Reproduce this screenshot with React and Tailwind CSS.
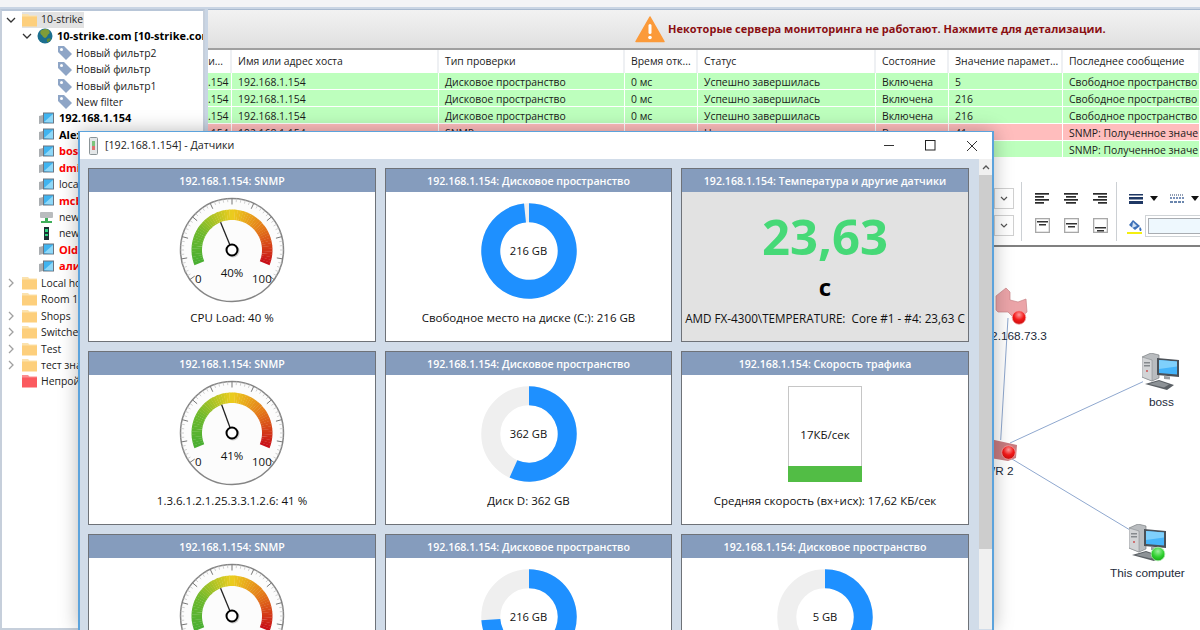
import React from "react";

const polar = (cx, cy, r, deg) => {
  const a = ((deg - 90) * Math.PI) / 180;
  return [cx + r * Math.cos(a), cy + r * Math.sin(a)];
};
const arcPath = (cx, cy, r0, r1, a0, a1) => {
  const [x0, y0] = polar(cx, cy, r1, a0);
  const [x1, y1] = polar(cx, cy, r1, a1);
  const [x2, y2] = polar(cx, cy, r0, a1);
  const [x3, y3] = polar(cx, cy, r0, a0);
  const large = a1 - a0 > 180 ? 1 : 0;
  return `M${x0} ${y0}A${r1} ${r1} 0 ${large} 1 ${x1} ${y1}L${x2} ${y2}A${r0} ${r0} 0 ${large} 0 ${x3} ${y3}Z`;
};
const lerp = (s, e, t) => Math.round(s + (e - s) * t);
const stops = [
  [0, [74, 175, 50]],
  [0.22, [110, 185, 45]],
  [0.5, [236, 205, 30]],
  [0.75, [228, 120, 25]],
  [1, [200, 16, 24]],
];
const colorAt = (t) => {
  for (let i = 0; i < stops.length - 1; i++) {
    const [p0, c0] = stops[i];
    const [p1, c1] = stops[i + 1];
    if (t <= p1) {
      const k = (t - p0) / (p1 - p0);
      return `rgb(${lerp(c0[0], c1[0], k)},${lerp(c0[1], c1[1], k)},${lerp(c0[2], c1[2], k)})`;
    }
  }
  return "rgb(200,16,24)";
};

function Gauge({ value }) {
  const cx = 56, cy = 56, R = 51.5;
  const angle = -112 + (value / 100) * 224;
  const segs = Array.from({ length: 56 }, (_, i) => i);
  const ticks = Array.from({ length: 51 }, (_, i) => i);
  const [nx, ny] = polar(cx, cy, 30, angle);
  return (
    <svg width="112" height="112" viewBox="0 0 112 112" className="block">
      <circle cx={cx} cy={cy} r={R} fill="#fcfcfc" stroke="#858585" strokeWidth="1.5" />
      {ticks.map((i) => {
        const a = -125 + i * 5;
        const major = i % 5 === 0;
        const [x0, y0] = polar(cx, cy, R, a);
        const [x1, y1] = polar(cx, cy, major ? R - 6 : R - 3.5, a);
        return <line key={i} x1={x0} y1={y0} x2={x1} y2={y1} stroke={major ? "#777" : "#c4c4c4"} strokeWidth={major ? 1 : 0.8} />;
      })}
      {segs.map((i) => {
        const a0 = -112 + i * 4;
        return <path key={i} d={arcPath(cx, cy, 30, 40.5, a0, a0 + 4.4 > 112 ? 112 : a0 + 4.4)} fill={colorAt(i / 55)} />;
      })}
      <line x1={cx} y1={cy} x2={nx} y2={ny} stroke="#222" strokeWidth="1.3" />
      <circle cx={cx + 1} cy={cy + 1} r="6.5" fill="#ccc" />
      <circle cx={cx} cy={cy} r="5.5" fill="#fff" stroke="#000" strokeWidth="2" />
    </svg>
  );
}

function Donut({ start, end }) {
  const cx = 50, cy = 50;
  return (
    <svg width="100" height="100" viewBox="0 0 100 100" className="block">
      <circle cx={cx} cy={cy} r="38.25" fill="none" stroke="#efefef" strokeWidth="19" />
      <path d={arcPath(cx, cy, 28.75, 47.75, start, end)} fill="#1e90ff" />
    </svg>
  );
}

function Card({ title, children, caption, gray }) {
  return (
    <div className={`border border-[#6e7278] flex flex-col h-[174px] ${gray ? "bg-[#e2e2e2]" : "bg-white"}`}>
      <div className="h-[23px] shrink-0 bg-[#859cbd] text-white text-center text-[10.6px] font-semibold leading-[25px] whitespace-nowrap">{title}</div>
      {children}
      {caption && <div className="text-center text-[11.5px] leading-[16px] text-[#111] whitespace-nowrap">{caption}</div>}
    </div>
  );
}

function GaugeCard({ value, caption }) {
  return (
    <Card title="192.168.1.154: SNMP" caption={caption}>
      <div className="relative mx-auto mt-[2px] mb-[4px] w-[112px] h-[112px] shrink-0 text-[11.5px] text-[#111]">
        <Gauge value={value} />
        <span className="absolute left-[38px] top-[71px] w-[36px] text-center leading-[16px]">{value}%</span>
        <span className="absolute left-[19px] top-[77px] leading-[16px]">0</span>
        <span className="absolute left-[76px] top-[77px] leading-[16px]">100</span>
      </div>
    </Card>
  );
}

function DonutCard({ value, start, end, caption }) {
  return (
    <Card title="192.168.1.154: Дисковое пространство" caption={caption}>
      <div className="relative mx-auto mt-[9px] mb-[9px] w-[100px] h-[100px] shrink-0">
        <Donut start={start} end={end} />
        <span className="absolute inset-0 flex items-center justify-center text-[11.2px] text-[#111]">{value}</span>
      </div>
    </Card>
  );
}

const PcIcon = () => (
  <svg width="15" height="15" viewBox="0 0 15 15" className="shrink-0">
    <path d="M0 5l4-1v8l-4 1z" fill="#a9adb0" />
    <rect x="4" y="1.500" width="11" height="11" fill="#6a7480" />
    <rect x="5" y="2.500" width="9" height="9" fill="#40b4f0" />
    <path d="M5 11l9-8v8.500z" fill="#8fd8f8" />
  </svg>
);
const Folder = ({ color = "#fdcf7c", tab = "#fbe2ae" }) => (
  <svg width="15" height="14" viewBox="0 0 15 14" className="shrink-0">
    <path d="M0 1h6l1.500 1.500H15V5H0z" fill={tab} />
    <rect x="0" y="3.500" width="15" height="10" fill={color} />
  </svg>
);
const Tag = () => (
  <svg width="16" height="16" viewBox="0 0 16 16" className="shrink-0">
    <path d="M1 1h6l8 8-6 6-8-8z" fill="#8ea5c6" />
    <circle cx="4.500" cy="4.500" r="1.500" fill="#fff" />
  </svg>
);
const Globe = () => (
  <svg width="16" height="16" viewBox="0 0 16 16" className="shrink-0">
    <circle cx="8" cy="8" r="7.500" fill="#1c6f8f" />
    <path d="M4 2.500c3-2 6-2 8 0 1 2 1 3-1 4-1 3-3 4-4 3-2-1-1-2-3-3-1-1-1-3 0-4z" fill="#7f9c38" />
    <path d="M10 11c2-1 3-1 4 0-1 2-2 3-4 3z" fill="#5e8a30" />
  </svg>
);
const Chevron = ({ open }) => (
  <svg width="10" height="10" viewBox="0 0 10 10" className="shrink-0">
    {open ? (
      <path d="M1 3l4 4 4-4" fill="none" stroke="#333" strokeWidth="1.300" />
    ) : (
      <path d="M3 1l4 4-4 4" fill="none" stroke="#a0a0a0" strokeWidth="1.300" />
    )}
  </svg>
);

function Row({ indent, chev, icon, label, cls = "text-[#222] text-[10.4px]", gap = 4 }) {
  return (
    <div className="h-[16.45px] flex items-center whitespace-nowrap" style={{ paddingLeft: indent }}>
      <span className="w-[12px] mr-[5px] flex justify-center">{chev !== undefined && <Chevron open={chev} />}</span>
      <span className="flex" style={{ marginRight: gap }}>{icon}</span>
      <span className={`${cls} leading-[16px]`}>{label}</span>
    </div>
  );
}

const Bold = "font-bold text-black text-[11px]";
const Red = "font-bold text-[#ff0000] text-[11px]";

function Tree() {
  return (
    <div className="w-[205px] shrink-0 mr-[3px] border-2 border-[#c6cfdb] border-t-[#b8c6d8] bg-white pt-[1px] overflow-hidden h-full">
      <div className="flex items-center h-[16px] pl-[3px] whitespace-nowrap">
        <span className="w-[12px] mr-[5px] flex justify-center"><Chevron open /></span>
        <span className="flex items-center bg-[#e2e2e2] pr-[1px] h-[16px]">
          <Folder />
          <span className="ml-[4px] text-[10.4px] text-[#222]">10-strike</span>
        </span>
      </div>
      <Row indent={20} chev icon={<Globe />} label="10-strike.com [10-strike.com]" cls={Bold} />
      <Row indent={38} icon={<Tag />} gap={3} label="Новый фильтр2" />
      <Row indent={38} icon={<Tag />} gap={3} label="Новый фильтр" />
      <Row indent={38} icon={<Tag />} gap={3} label="Новый фильтр1" />
      <Row indent={38} icon={<Tag />} gap={3} label="New filter" />
      <Row indent={20} icon={<PcIcon />} gap={5} label="192.168.1.154" cls={Bold} />
      <Row indent={20} icon={<PcIcon />} gap={5} label="Alex" cls={Bold} />
      <Row indent={20} icon={<PcIcon />} gap={5} label="boss" cls={Red} />
      <Row indent={20} icon={<PcIcon />} gap={5} label="dmi" cls={Red} />
      <Row indent={20} icon={<PcIcon />} gap={5} label="local" />
      <Row indent={20} icon={<PcIcon />} gap={5} label="mcb" cls={Red} />
      <Row indent={20} gap={5} icon={<svg width="15" height="15" viewBox="0 0 15 15"><rect x="1" y="2" width="13" height="6" rx="1" fill="#b9bcbe" /><rect x="6" y="8" width="3" height="3" fill="#3fae5a" /><rect x="2" y="11" width="11" height="2" fill="#3fae5a" /></svg>} label="new" />
      <Row indent={20} gap={5} icon={<svg width="15" height="15" viewBox="0 0 15 15"><rect x="5" y="1" width="5" height="13" fill="#1b3034" /><rect x="6" y="3" width="3" height="3" fill="#2fd47f" /><rect x="6" y="8" width="3" height="2" fill="#2fd47f" /></svg>} label="new" />
      <Row indent={20} icon={<PcIcon />} gap={5} label="Old" cls={Red} />
      <Row indent={20} icon={<PcIcon />} gap={5} label="али" cls={Red} />
      <Row indent={3} chev={false} icon={<Folder />} label="Local ho" />
      <Row indent={3} icon={<Folder />} label="Room 1" />
      <Row indent={3} chev={false} icon={<Folder />} label="Shops" />
      <Row indent={3} chev={false} icon={<Folder />} label="Switches" />
      <Row indent={3} chev={false} icon={<Folder />} label="Test" />
      <Row indent={3} chev={false} icon={<Folder />} label="тест зна" />
      <Row indent={3} icon={<Folder color="#fb5a5f" tab="#fb8f92" />} label="Непрой" />
    </div>
  );
}

const cols = [
  { w: 24, h: "и..." },
  { w: 207, h: "Имя или адрес хоста" },
  { w: 186, h: "Тип проверки" },
  { w: 73, h: "Время отк..." },
  { w: 178, h: "Статус" },
  { w: 73, h: "Состояние" },
  { w: 114, h: "Значение парамет..." },
  { w: 137, h: "Последнее сообщение" },
];
const rowsData = ["5", "216", "216"];

function Cell({ w, children, bg, first }) {
  return (
    <div className={`h-[16px] mr-[1px] overflow-hidden whitespace-nowrap text-[10.4px] leading-[18px] text-[#1a1a1a] shrink-0 ${bg} ${first ? "text-right pr-[4px]" : "pl-[6px] pr-[2px]"}`} style={{ width: w - 1 }}>
      {children}
    </div>
  );
}

function Table() {
  const texts = (v) => [".154", "192.168.1.154", "Дисковое пространство", "0 мс", "Успешно завершилась", "Включена", v, "Свободное пространство"];
  return (
    <div className="h-[110px] overflow-hidden bg-white shrink-0">
      <div className="flex h-[23px] items-center">
        {cols.map((c, i) => (
          <div key={i} className={`h-[23px] shrink-0 border-r-2 border-[#eef0f3] text-[10.4px] leading-[23px] text-[#222] whitespace-nowrap overflow-hidden ${i === 0 ? "text-right pr-[7px]" : "pl-[6px]"}`} style={{ width: c.w }}>
            {c.h}
          </div>
        ))}
      </div>
      {rowsData.map((v, i) => (
        <div key={i} className="flex mb-[1px]">
          {cols.map((c, j) => (
            <Cell key={j} w={c.w} bg="bg-[#bdffbd]" first={j === 0}>{texts(v)[j]}</Cell>
          ))}
        </div>
      ))}
      <div className="flex mb-[1px]">
        {cols.map((c, j) => (
          <Cell key={j} w={c.w} bg="bg-[#ffbdbd]" first={j === 0}>
            {[".154", "192.168.1.154", "SNMP", "", "Не", "В", "41", "SNMP: Полученное значе"][j]}
          </Cell>
        ))}
      </div>
      <div className="flex">
        {cols.map((c, j) => (
          <Cell key={j} w={c.w} bg="bg-[#bdffbd]" first={j === 0}>
            {j === 7 ? "SNMP: Полученное значе" : ""}
          </Cell>
        ))}
      </div>
    </div>
  );
}

const AlignIcon = ({ kind }) => {
  const rows = kind === "l" ? [[0, 14], [0, 9], [0, 14], [0, 9]] : kind === "c" ? [[0, 14], [2, 10], [0, 14], [2, 10]] : [[0, 14], [5, 9], [0, 14], [5, 9]];
  return (
    <svg width="14" height="11" viewBox="0 0 14 11" className="block">
      {rows.map(([x, w], i) => <rect key={i} x={x} y={i * 3} width={w} height="1.700" fill="#2a2a2a" />)}
    </svg>
  );
};
const VAlign = ({ y }) => (
  <svg width="15" height="15" viewBox="0 0 15 15" className="block">
    <rect x="0.650" y="0.650" width="13.700" height="13.700" fill="#fff" stroke="#a8a8a8" strokeWidth="1.300" />
    <rect x="2" y={y} width="11" height="1.500" fill="#333" />
    <rect x="4" y={y + 3} width="7" height="1.500" fill="#333" />
  </svg>
);
const Dropdown = () => (
  <span className="h-[21px] w-[20px] border border-[#d0d0d0] bg-white flex items-center justify-center">
    <svg width="8" height="6" viewBox="0 0 8 6"><path d="M1 1l3 3 3-3" fill="none" stroke="#555" strokeWidth="1.200" /></svg>
  </span>
);
const Caret = () => <svg width="8" height="5" viewBox="0 0 8 5" className="shrink-0"><path d="M0 0h8L4 5z" fill="#111" /></svg>;

function Toolbar() {
  return (
    <div className="h-[87px] shrink-0 border-b-2 border-[#808080] bg-white flex items-start pl-[786px] overflow-hidden">
      <div className="flex flex-col gap-[6px] mt-[28px] shrink-0">
        <Dropdown />
        <Dropdown />
      </div>
      <div className="w-px h-[59px] bg-[#ccd0d4] ml-[7px] mt-[22px] shrink-0" />
      <div className="grid grid-cols-[14px_14px_14px] gap-x-[15px] gap-y-[14px] ml-[13px] mt-[33px] shrink-0">
        <AlignIcon kind="l" /><AlignIcon kind="c" /><AlignIcon kind="r" />
        <VAlign y={3} /><VAlign y={5} /><VAlign y={9} />
      </div>
      <div className="w-px h-[59px] bg-[#ccd0d4] ml-[9px] mt-[22px] shrink-0" />
      <div className="flex flex-col ml-[10px] mt-[33px] shrink-0">
        <div className="flex items-center h-[11px] pl-[2px]">
          <svg width="14" height="10" viewBox="0 0 14 10" className="shrink-0"><rect y="0" width="14" height="1.500" fill="#1f3864" /><rect y="3" width="14" height="2.500" fill="#1f3864" /><rect y="7" width="14" height="3" fill="#1f3864" /></svg>
          <span className="ml-[7px] flex"><Caret /></span>
          <svg width="14" height="10" viewBox="0 0 14 10" className="ml-[12px] shrink-0"><line x1="0" y1="1" x2="14" y2="1" stroke="#1f3864" strokeDasharray="1 1" /><line x1="0" y1="4" x2="14" y2="4" stroke="#4f6fa3" strokeWidth="1.300" strokeDasharray="2 1" /><line x1="0" y1="8" x2="14" y2="8" stroke="#6a86ad" strokeWidth="2" strokeDasharray="3 1" /></svg>
          <span className="ml-[7px] flex"><Caret /></span>
        </div>
        <div className="flex items-center mt-[11px] h-[22px]">
          <svg width="16" height="15" viewBox="0 0 16 15" className="shrink-0"><path d="M6 1l7 6-5 4-6-5z" fill="#3d70b8" /><path d="M6 3l4 4-5 2z" fill="#cfe0f2" /><path d="M13 8c2 2 2 4 0 4-1-1-1-3 0-4z" fill="#3d70b8" /><rect y="13" width="15" height="2" fill="#f4ef10" /></svg>
          <span className="ml-[2px] h-[22px] w-[70px] border border-[#cfd3d6] p-[2px] flex">
            <span className="block flex-1 border border-[#a9adb2] bg-[#eef8fe]" />
          </span>
        </div>
      </div>
    </div>
  );
}

const Pc = ({ ok }) => (
  <svg width="38" height="38" viewBox="0 0 38 38" className="block">
    <path d="M0 4l9-4 8 2v23l-7 3-10-4z" fill="#b9bcbf" stroke="#6c7074" strokeWidth="0.600" />
    <path d="M0 4l10 3v21l-10-4z" fill="#d2d4d6" stroke="#7c8084" strokeWidth="0.500" />
    <rect x="2" y="9" width="6" height="1.500" fill="#85898d" />
    <rect x="2" y="12" width="6" height="1.500" fill="#85898d" />
    <circle cx="5" cy="18" r="0.900" fill="#c44" />
    <path d="M15 5l22 2v17l-22-2z" fill="#4b5158" />
    <path d="M17 7l18 1.500v13L17 20z" fill="#45b4fa" />
    <path d="M17 7l18 1.500v5L17 16z" fill="#7fd0fc" />
    <path d="M22 23l6 .5v3l-6-.5z" fill="#9a9ea2" />
    <path d="M3 31l14-4 15 5-7 5z" fill="#5b6065" />
    <path d="M7 31l10-3 10 3.500-5 3z" fill="#8d9296" />
    {ok && <circle cx="29" cy="30" r="6.800" fill="url(#gd)" stroke="#a3e8a3" strokeWidth="0.800" />}
    <defs>
      <radialGradient id="gd" cx="50%" cy="30%" r="70%"><stop offset="0%" stopColor="#9cf09c" /><stop offset="60%" stopColor="#2fd02f" /><stop offset="100%" stopColor="#17a817" /></radialGradient>
    </defs>
  </svg>
);

function Canvas() {
  return (
    <div className="relative flex-1 bg-white overflow-hidden text-[11.8px] leading-[14px] text-[#1c2a3a]" style={{ fontFamily: '"Liberation Sans", Arial, sans-serif' }}>
      <svg className="absolute inset-0" width="992" height="383" viewBox="208 247 992 383">
        <defs>
          <radialGradient id="rd" cx="50%" cy="30%" r="70%"><stop offset="0%" stopColor="#ff9a9a" /><stop offset="55%" stopColor="#f31818" /><stop offset="100%" stopColor="#c80f0f" /></radialGradient>
        </defs>
        <path d="M1010 443L1143 381.700M1012 459L1130 530M1008 318L1000.700 440" stroke="#8fa8cf" strokeWidth="1" fill="none" />
        <path d="M996 296l10-8 4 4v8l8 2 8-3 1 13-7 6-8-2-4-4h-10l-2-2z" fill="#eba4a8" stroke="#c98487" strokeWidth="0.700" />
        <circle cx="1019" cy="317.500" r="6.800" fill="url(#rd)" stroke="#f5a5a5" strokeWidth="0.800" />
        <path d="M990 439l27 6-1 13-8 3-18-3z" fill="#c97c80" />
        <circle cx="1008.500" cy="452.500" r="6.800" fill="url(#rd)" stroke="#f5a5a5" strokeWidth="0.800" />
      </svg>
      <span className="absolute left-[770px] top-[82px] whitespace-nowrap">192.168.73.3</span>
      <span className="absolute left-[776px] top-[217px] whitespace-nowrap">WR 2</span>
      <div className="absolute left-[934px] top-[106px]"><Pc /></div>
      <span className="absolute left-[941px] top-[148px]">boss</span>
      <div className="absolute left-[921px] top-[277px]"><Pc ok /></div>
      <span className="absolute left-[902px] top-[319px] whitespace-nowrap">This computer</span>
    </div>
  );
}

function Sensors() {
  return (
    <div className="absolute left-[78px] top-[131px] w-[916px] h-[499px] border-l-2 border-r-2 border-t border-[#5ca3dc] bg-[#d1dce9] shadow-[0_0_18px_rgba(0,0,0,0.28)] flex flex-col">
      <div className="h-[27px] bg-white shrink-0 flex items-center pl-[9px]">
        <svg width="9" height="18" viewBox="0 0 9 18"><rect x="0.500" y="0.500" width="8" height="17" rx="1" fill="#e4e7e8" stroke="#8b9497" /><rect x="3" y="4" width="3" height="5" fill="#7cc47c" /><rect x="3" y="9" width="3" height="4" fill="#e07070" /></svg>
        <span className="ml-[7px] text-[10.7px] text-[#222]">[192.168.1.154] - Датчики</span>
        <div className="ml-auto flex items-center">
          <span className="w-[38px] flex justify-center"><svg width="11" height="11" viewBox="0 0 11 11"><rect y="5" width="10" height="1" fill="#333" /></svg></span>
          <span className="w-[44px] flex justify-center"><svg width="11" height="11" viewBox="0 0 11 11"><rect x="0.500" y="0.500" width="9.500" height="9.500" fill="none" stroke="#222" /></svg></span>
          <span className="w-[40px] flex justify-center"><svg width="12" height="12" viewBox="0 0 12 12"><path d="M1 1l10 10M11 1L1 11" stroke="#333" /></svg></span>
        </div>
      </div>
      <div className="flex flex-1 overflow-hidden pl-[8px] pt-[9px]">
        <div className="grid grid-cols-[288px_287px_288px] gap-x-[9px] gap-y-[9px] content-start shrink-0 h-[560px]">
          <GaugeCard value={40} caption="CPU Load: 40 %" />
          <DonutCard value="216 GB" start={0} end={354} caption="Свободное место на диске (C:): 216 GB" />
          <Card title="192.168.1.154: Температура и другие датчики" gray>
            <div className="text-center text-[#46d977] text-[49px] leading-[64px] font-bold mt-[12px]">23,63</div>
            <div className="text-center text-black text-[24px] font-bold leading-[28px] mt-[5px]">c</div>
            <div className="text-center text-[#111] text-[11.7px] leading-[16px] mt-[9px] whitespace-pre">AMD FX-4300\TEMPERATURE:  Core #1 - #4: 23,63 C</div>
          </Card>
          <GaugeCard value={41} caption="1.3.6.1.2.1.25.3.3.1.2.6: 41 %" />
          <DonutCard value="362 GB" start={0} end={204} caption="Диск D: 362 GB" />
          <Card title="192.168.1.154: Скорость трафика" caption="Средняя скорость (вх+исх): 17,62 КБ/сек">
            <div className="mx-auto mt-[11px] mb-[11px] w-[74px] h-[96px] border border-[#c6c6c6] flex flex-col shrink-0">
              <div className="flex-1 flex items-center justify-center pt-[16px] text-[11.5px] text-[#111]">17КБ/сек</div>
              <div className="h-[16px] bg-[#52bd45] -mx-[1px] -mb-[1px]" />
            </div>
          </Card>
          <GaugeCard value={40} caption="CPU Load: 40 %" />
          <DonutCard value="216 GB" start={0} end={266} caption="" />
          <DonutCard value="5 GB" start={0} end={145} caption="" />
        </div>
        <div className="w-[13px] h-[470px] bg-[#f0f0f0] shrink-0 -mt-[9px] ml-auto">
          <div className="h-[16px] flex items-center justify-center">
            <svg width="8" height="6" viewBox="0 0 8 6"><path d="M1 5l3-3 3 3" fill="none" stroke="#555" strokeWidth="1.300" /></svg>
          </div>
          <div className="h-[374px] bg-[#cdcdcd]" />
        </div>
      </div>
    </div>
  );
}

export default function App() {
  return (
    <div className="relative w-[1200px] h-[630px] overflow-hidden bg-white flex flex-col" style={{ fontFamily: '"Open Sans", "Noto Sans", sans-serif' }}>
      <div className="h-[7px] shrink-0 bg-[#f3f4f6]" />
      <div className="flex flex-1 min-h-0 bg-[#c9d5e4] pt-[2px]">
        <Tree />
        <div className="flex-1 flex flex-col min-w-0 border-t border-[#a8bad0]">
          <div className="h-[40px] shrink-0 border-b-2 border-[#a0a0a0] bg-gradient-to-b from-[#f2f2f2] to-[#e0e0e0] flex items-center pl-[427px] whitespace-nowrap">
            <svg width="30" height="27" viewBox="0 0 30 27"><path d="M15 1L29 25.500H1z" fill="#fb9a3a" stroke="#fb9a3a" strokeWidth="1.500" strokeLinejoin="round" /><rect x="13.500" y="8" width="3" height="10" rx="1.500" fill="#fff" /><circle cx="15" cy="21.500" r="1.800" fill="#fff" /></svg>
            <span className="ml-[3px] text-[11px] font-bold text-[#8a0f12]">Некоторые сервера мониторинга не работают. Нажмите для детализации.</span>
          </div>
          <Table />
          <Toolbar />
          <Canvas />
        </div>
      </div>
      <Sensors />
    </div>
  );
}
